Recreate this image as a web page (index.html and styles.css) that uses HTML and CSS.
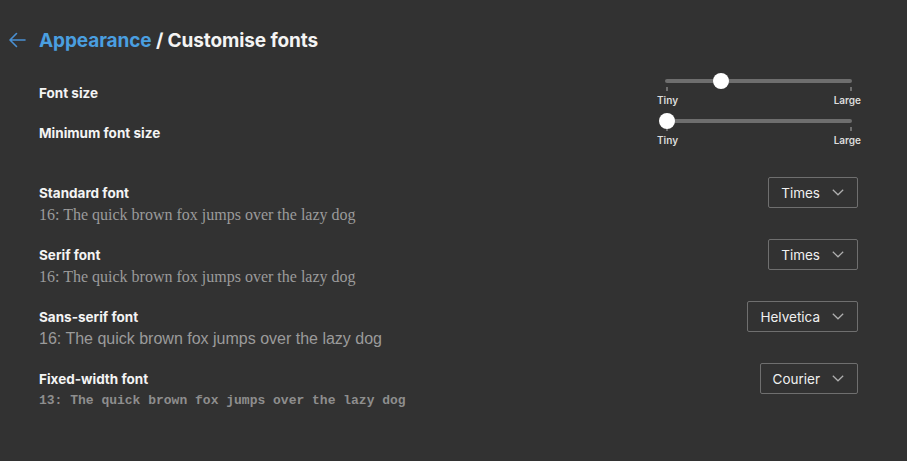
FILE: index.html
```html
<!DOCTYPE html>
<html>
<head>
<meta charset="utf-8">
<link rel="stylesheet" href="styles.css">
</head>
<body>
<div class="page">
  <header class="header">
    <svg class="back" width="18" height="16" viewBox="0 0 18 16"><path d="M17 8H2.5M8.5 1.5L2 8l6.5 6.5" fill="none" stroke="#4a90d2" stroke-width="1.6" stroke-linecap="round" stroke-linejoin="round"/></svg>
    <h1 class="title"><span class="crumb">Appearance</span> / Customise fonts</h1>
  </header>
  <div class="content">
    <div class="slider-row">
      <div class="label slider-label">Font size</div>
      <div class="slider">
        <div class="track"></div>
        <div class="tick tick-left"></div>
        <div class="tick tick-right"></div>
        <div class="thumb" style="left: 48px"></div>
        <div class="scale"><span>Tiny</span><span>Large</span></div>
      </div>
    </div>
    <div class="slider-row second">
      <div class="label slider-label">Minimum font size</div>
      <div class="slider">
        <div class="track"></div>
        <div class="tick tick-left"></div>
        <div class="tick tick-right"></div>
        <div class="thumb" style="left: -6px"></div>
        <div class="scale"><span>Tiny</span><span>Large</span></div>
      </div>
    </div>

    <div class="font-row first">
      <div class="text">
        <div class="label">Standard font</div>
        <div class="sample serif">16: The quick brown fox jumps over the lazy dog</div>
      </div>
      <div class="select">Times<svg class="chev" width="12" height="7" viewBox="0 0 12 7"><path d="M0.8 0.8L6 5.8l5.2-5" fill="none" stroke="#b0b0b0" stroke-width="1.2"/></svg></div>
    </div>
    <div class="font-row">
      <div class="text">
        <div class="label">Serif font</div>
        <div class="sample serif">16: The quick brown fox jumps over the lazy dog</div>
      </div>
      <div class="select">Times<svg class="chev" width="12" height="7" viewBox="0 0 12 7"><path d="M0.8 0.8L6 5.8l5.2-5" fill="none" stroke="#b0b0b0" stroke-width="1.2"/></svg></div>
    </div>
    <div class="font-row">
      <div class="text">
        <div class="label">Sans-serif font</div>
        <div class="sample sans">16: The quick brown fox jumps over the lazy dog</div>
      </div>
      <div class="select">Helvetica<svg class="chev" width="12" height="7" viewBox="0 0 12 7"><path d="M0.8 0.8L6 5.8l5.2-5" fill="none" stroke="#b0b0b0" stroke-width="1.2"/></svg></div>
    </div>
    <div class="font-row">
      <div class="text">
        <div class="label">Fixed-width font</div>
        <div class="sample mono">13: The quick brown fox jumps over the lazy dog</div>
      </div>
      <div class="select">Courier<svg class="chev" width="12" height="7" viewBox="0 0 12 7"><path d="M0.8 0.8L6 5.8l5.2-5" fill="none" stroke="#b0b0b0" stroke-width="1.2"/></svg></div>
    </div>
  </div>
</div>
</body>
</html>
```
FILE: styles.css
```css
html, body {
  margin: 0;
  padding: 0;
  background: #323232;
  height: 100%;
}
body {
  font-family: Inter, "Liberation Sans", sans-serif;
  color: #f2f2f2;
}
.page {
  padding: 24px 49px 0 8px;
}
.header {
  display: flex;
  align-items: center;
  height: 32px;
  gap: 13px;
}
.back {
  display: block;
}
.title {
  margin: 0;
  font-size: 19px;
  font-weight: 700;
  letter-spacing: -0.1px;
  color: #f4f4f4;
}
.crumb {
  color: #4a9fe0;
}
.content {
  padding-left: 31px;
  padding-top: 17px;
}
.label {
  font-size: 13.5px;
  font-weight: 700;
  line-height: 16px;
  color: #f4f4f4;
}
.slider-row {
  display: flex;
  justify-content: space-between;
  align-items: flex-start;
  height: 32px;
  margin-right: -3px;
}
.slider-row.second {
  margin-top: 8px;
}
.slider-label {
  padding-top: 12px;
}
.slider {
  position: relative;
  width: 204px;
  height: 32px;
}
.track {
  position: absolute;
  left: 8px;
  right: 9px;
  top: 6px;
  height: 4px;
  border-radius: 2px;
  background: #6e6e6e;
}
.tick {
  position: absolute;
  top: 14px;
  width: 2px;
  height: 4px;
  background: #6e6e6e;
}
.tick-left { left: 9px; }
.tick-right { right: 9px; }
.thumb {
  position: absolute;
  top: 0;
  width: 16px;
  height: 16px;
  border-radius: 50%;
  background: #ffffff;
  margin-left: 8px;
}
.scale {
  position: absolute;
  left: 0;
  right: 0;
  top: 21px;
  display: flex;
  justify-content: space-between;
  font-size: 10px;
  font-weight: 600;
  line-height: 12px;
  color: #dcdcdc;
}
.font-row {
  display: flex;
  justify-content: space-between;
  align-items: flex-start;
  margin-top: 14px;
}
.font-row.first {
  margin-top: 32px;
}
.text {
  padding-top: 8px;
}
.sample {
  color: #9b9b9b;
  margin-top: 4px;
}
.serif {
  font-family: "Liberation Serif", serif;
  font-size: 16px;
  line-height: 20px;
}
.sans {
  font-family: "Liberation Sans", sans-serif;
  font-size: 16px;
  line-height: 20px;
}
.mono {
  font-family: "Liberation Mono", monospace;
  font-size: 13px;
  font-weight: 700;
  line-height: 20px;
  color: #8e8e8e;
}
.select {
  display: flex;
  align-items: center;
  gap: 12px;
  height: 29px;
  padding: 0 13px 0 12px;
  border: 1px solid #6f6f6f;
  border-radius: 2px;
  font-size: 13.5px;
  color: #f0f0f0;
}
.chev {
  display: block;
}
```
